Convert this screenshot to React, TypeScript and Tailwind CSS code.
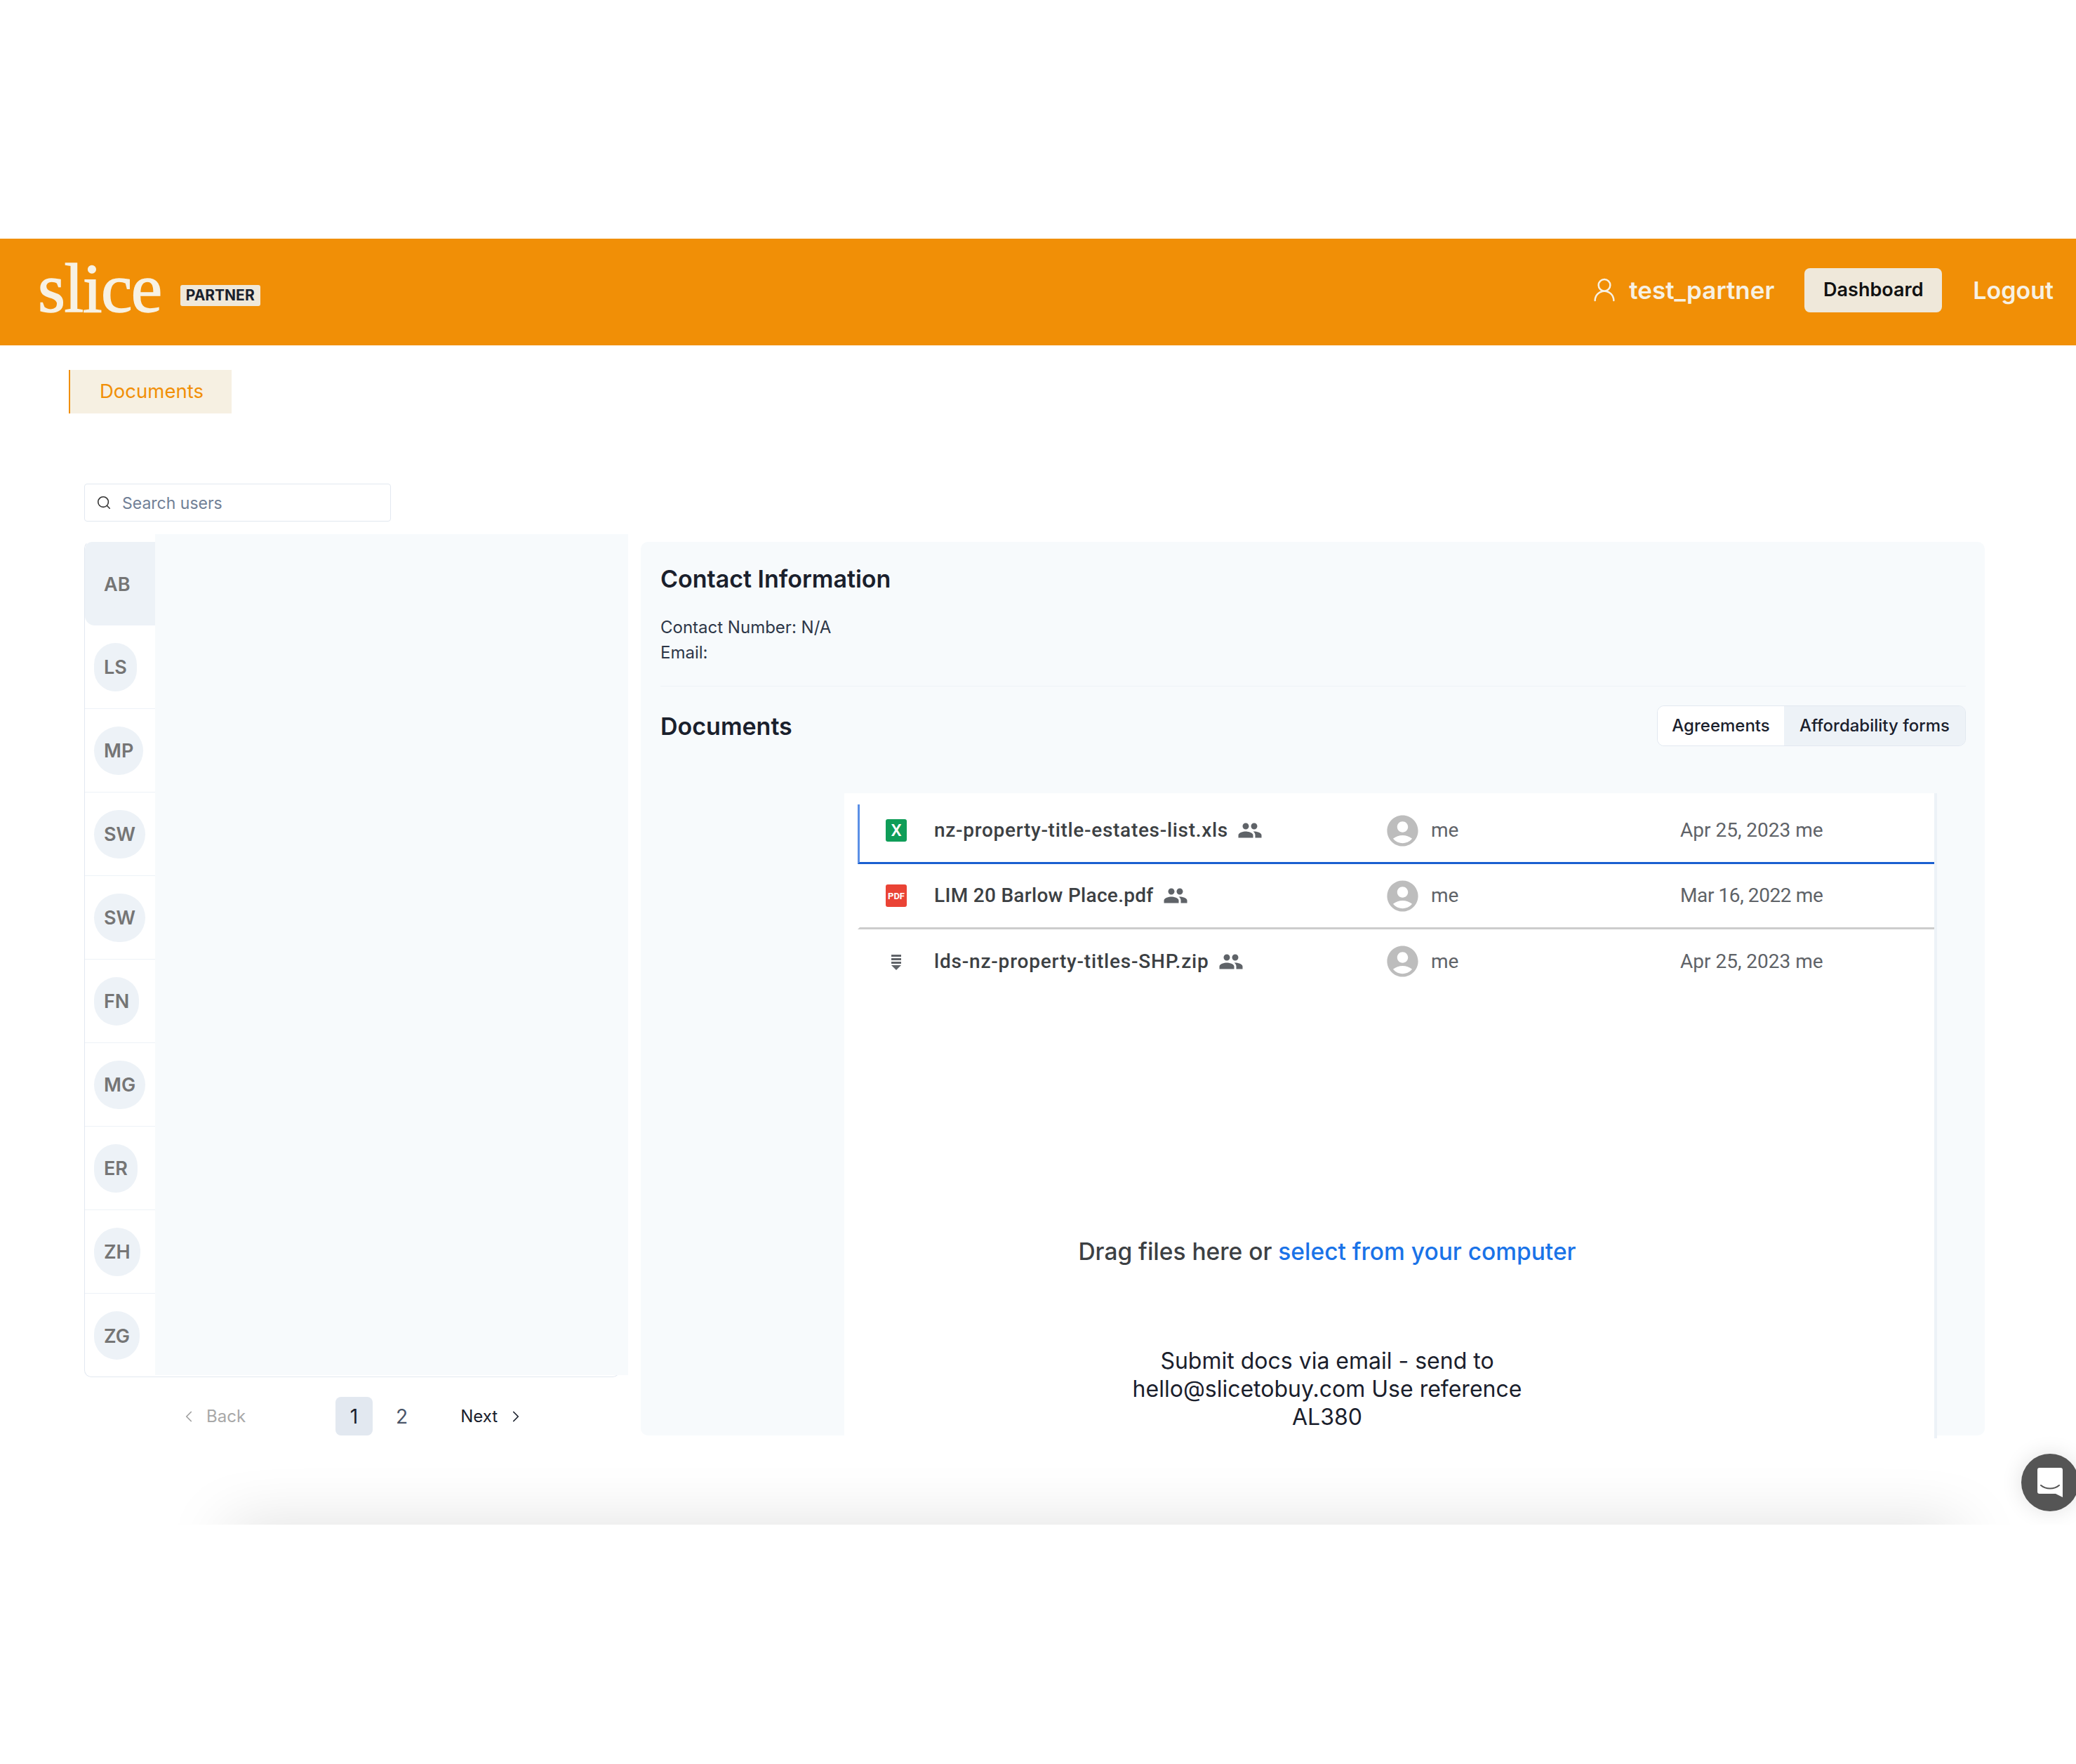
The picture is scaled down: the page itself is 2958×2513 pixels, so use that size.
import React from "react";
import { ChevronLeft, ChevronRight, Search, UserRound } from "lucide-react";
import { MdAccountCircle, MdPeople } from "react-icons/md";

const users = [
  { i: "AB", active: true },
  { i: "LS" },
  { i: "MP" },
  { i: "SW" },
  { i: "SW" },
  { i: "FN" },
  { i: "MG" },
  { i: "ER" },
  { i: "ZH" },
  { i: "ZG" },
];

function XlsIcon() {
  return (
    <div className="flex h-[32px] w-[30px] items-center justify-center rounded-[3px] bg-[#0f9d58] font-['Roboto',sans-serif] text-[24px] font-medium leading-none text-white">
      X
    </div>
  );
}

function PdfIcon() {
  return (
    <div className="flex h-[32px] w-[30px] items-center justify-center rounded-[3px] bg-[#ea4335] font-['Roboto',sans-serif] text-[13px] font-bold leading-none text-white">
      PDF
    </div>
  );
}

function ZipIcon() {
  return (
    <svg width="30" height="32" viewBox="0 0 30 32" fill="#5f6368">
      <rect x="8" y="6" width="14" height="3" />
      <rect x="8" y="11" width="14" height="3" />
      <rect x="8" y="16" width="14" height="3" />
      <path d="M8 21h14l-7 7z" />
    </svg>
  );
}

const files = [
  { name: "nz-property-title-estates-list.xls", date: "Apr 25, 2023", icon: <XlsIcon />, border: "border-b-[3px] border-l-[3px] border-b-[#1a5fd0] border-l-[#5b8fe6] pb-[8px]", h: "h-[85px]", track: "tracking-[0.7px]", dateTrack: "" },
  { name: "LIM 20 Barlow Place.pdf", date: "Mar 16, 2022", icon: <PdfIcon />, border: "border-b-[3px] border-l-[3px] border-b-[#cccccc] border-l-transparent", h: "h-[93px]", track: "tracking-[0.3px]", dateTrack: "tracking-[-0.4px]" },
  { name: "lds-nz-property-titles-SHP.zip", date: "Apr 25, 2023", icon: <ZipIcon />, border: "border-l-[3px] border-l-transparent", h: "h-[91px]", track: "tracking-[0.8px]", dateTrack: "" },
];

export default function App() {
  return (
    <div className="min-h-[2513px] bg-white pt-[340px] font-['Inter',sans-serif] text-[#1a202c]">
      <div className="relative h-[1832px] overflow-hidden">
        <header className="flex h-[152px] items-center justify-between bg-[#f18f06] pl-[54px] pr-[32px]">
          <div className="flex items-center">
            <span className="-mt-[10px] font-['Liberation_Serif',serif] text-[100px] leading-none tracking-[-1.5px] text-[#f7f1e3] [-webkit-text-stroke:1.5px_#f7f1e3]">
              slice
            </span>
            <span className="ml-[27px] mt-[10px] rounded-[3px] bg-[#efe8da] px-[8px] text-[21px] font-bold leading-[30px] text-[#1a202c]">
              PARTNER
            </span>
          </div>
          <div className="-mt-[6px] flex items-center">
            <UserRound size={40} strokeWidth={1.5} className="text-[#f7f1e3]" />
            <span className="ml-[15px] text-[35px] font-semibold text-[#f7f1e3]">test_partner</span>
            <button className="ml-[43px] h-[63px] w-[196px] rounded-[8px] bg-[#efe8da] text-[27px] font-semibold text-[#111111]">
              Dashboard
            </button>
            <span className="ml-[44px] text-[34px] font-semibold text-[#f7f1e3]">Logout</span>
          </div>
        </header>

        <div className="pl-[98px] pt-[35px]">
          <div className="flex h-[62px] w-[232px] items-center border-l-[2px] border-[#f18f06] bg-[#f6f0e2] pl-[42px] text-[27.5px] text-[#f18f06]">
            Documents
          </div>
        </div>

        <div className="mt-[100px] flex pl-[120px]">
          <div className="w-[793px]">
            <div className="flex h-[54px] w-[437px] items-center rounded-[4px] border border-[#e2e8f0] pl-[16px]">
              <Search size={22} strokeWidth={1.75} className="shrink-0 text-[#333333]" />
              <span className="ml-[15px] pt-[2px] text-[23px] text-[#718096]">Search users</span>
            </div>

            <div className="mt-[28px] flex h-[1191px] w-[763px] rounded-[10px] border border-[#e2e8f0] border-t-transparent">
              <div className="w-[100px] shrink-0">
                {users.map((u, idx) => (
                  <div
                    key={idx}
                    className={
                      u.active
                        ? "flex h-[119px] items-center rounded-tl-[10px] rounded-bl-[14px] bg-[#edf2f7] pl-[13px]"
                        : "flex h-[119px] items-center border-b border-[#edf2f7] pl-[13px] last:border-b-0"
                    }
                  >
                    <div className="flex h-[69px] items-center justify-center rounded-full bg-[#edf2f7] px-[14px] pt-[3px] text-[27px] font-semibold text-[#757575]">
                      {u.i}
                    </div>
                  </div>
                ))}
              </div>
              <div className="-mr-[13px] -mt-[11px] mb-[2px] flex-1 bg-[#f7fafc]" />
            </div>

            <div className="mt-[28px] flex h-[55px] items-center text-[24px]">
              <ChevronLeft size={26} strokeWidth={1.6} className="ml-[136px] text-[#a0a0a0]" />
              <span className="ml-[12px] text-[#a8a8a8]">Back</span>
              <span className="ml-[128px] flex h-[55px] w-[53px] items-center justify-center rounded-[8px] bg-[#e2e8f0] text-[28px]">1</span>
              <span className="ml-[33px] text-[28px] text-[#4a5568]">2</span>
              <span className="ml-[75px]">Next</span>
              <ChevronRight size={26} strokeWidth={1.6} className="ml-[13px] text-[#1a202c]" />
            </div>
          </div>

          <div className="mt-[83px] h-[1273px] w-[1915px] rounded-[10px] bg-[#f7fafc] pl-[28px] pr-[27px]">
            <h2 className="pt-[29px] text-[34px] font-semibold leading-[48px]">Contact Information</h2>
            <div className="mt-[27px] text-[24px] leading-[36px] text-[#2d3748]">
              <p>Contact Number: N/A</p>
              <p>Email:</p>
            </div>
            <div className="mt-[29px] border-t border-[#edf2f7]" />
            <div className="mt-[27px] flex h-[58px] items-center justify-between">
              <h2 className="text-[34px] font-semibold">Documents</h2>
              <div className="flex h-[58px] overflow-hidden rounded-[10px] border border-[#e2e8f0] text-[24px] font-medium">
                <div className="flex w-[180px] items-center justify-center bg-white">Agreements</div>
                <div className="flex w-[258px] items-center justify-center bg-[#edf2f7]">Affordability forms</div>
              </div>
            </div>

            <div className="ml-[262px] mt-[67px] h-[919px] w-[1557px] border-r-[4px] border-[#edf2f7] bg-white pt-[16px] font-['Roboto',sans-serif]">
              {files.map((f) => (
                <div
                  key={f.name}
                  className={`ml-[19px] grid grid-cols-[106px_647px_416px_1fr] items-center text-[28px] text-[#3c4043] ${f.h} ${f.border}`}
                >
                  <div className="pl-[37px]">{f.icon}</div>
                  <div className="flex items-center font-medium">
                    <span className={f.track}>{f.name}</span>
                    <MdPeople size={36} className="ml-[13px] text-[#5f6368]" />
                  </div>
                  <div className="flex items-center">
                    <MdAccountCircle size={53} className="-ml-[6px] text-[#bdbdbd]" />
                    <span className="ml-[14px] text-[#5f6368]">me</span>
                  </div>
                  <div className={`text-[#5f6368] ${f.dateTrack}`}>{f.date} me</div>
                </div>
              ))}

              <div className="w-[1376px] pt-[348px] text-center font-['Inter',sans-serif]">
                <p className="text-[33.5px] font-medium leading-[40px] text-[#3c4043]">
                  Drag files here or <span className="text-[#1a73e8]">select from your computer</span>
                </p>
                <p className="mx-auto mt-[116px] w-[620px] text-[32px] leading-[40px] text-[#1a202c]">
                  Submit docs via email - send to hello@slicetobuy.com Use reference AL380
                </p>
              </div>
            </div>
          </div>
        </div>

        <div className="absolute left-[325px] top-[1843px] h-[40px] w-[2468px] shadow-[0_0_90px_0_rgba(0,0,0,0.22)]" />

        <div className="absolute left-[2880px] top-[1731px] flex h-[82px] w-[82px] items-center justify-center rounded-full bg-[#555555] shadow-[0_0_30px_rgba(0,0,0,0.12)]">
          <svg width="36" height="42" viewBox="0 0 36 42">
            <path d="M3 0h30a3 3 0 0 1 3 3v39l-10-5H3a3 3 0 0 1-3-3V3a3 3 0 0 1 3-3z" fill="#ffffff" />
            <path d="M5 25c7 6 19 6 26 0" fill="none" stroke="#555555" strokeWidth="2" strokeLinecap="round" />
          </svg>
        </div>
      </div>
    </div>
  );
}
